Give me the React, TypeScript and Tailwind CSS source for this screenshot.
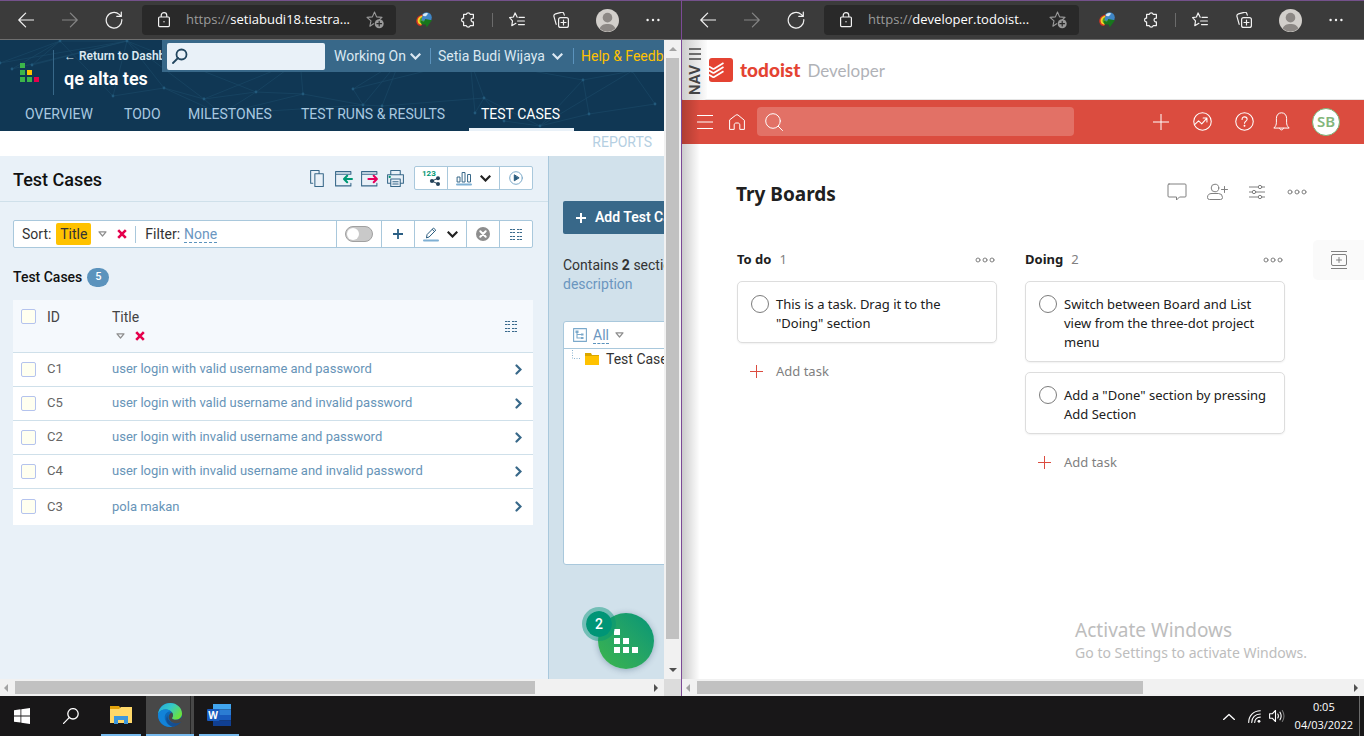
import React from "react";

type IconProps = { className?: string; children: React.ReactNode; box?: string; sw?: number };

function Icon({ className = "size-4", children, box = "0 0 16 16", sw = 1 }: IconProps) {
  return (
    <svg
      viewBox={box}
      className={`shrink-0 ${className}`}
      fill="none"
      stroke="currentColor"
      strokeWidth={sw}
      strokeLinecap="round"
      strokeLinejoin="round"
      aria-hidden="true"
    >
      {children}
    </svg>
  );
}

/* ---------- Browser chrome ---------- */

function ChromeButton({ label, className = "text-[#f2f2f2]", children }: { label: string; className?: string; children: React.ReactNode }) {
  return (
    <button type="button" aria-label={label} className={`flex h-full w-11 shrink-0 items-center justify-center ${className}`}>
      {children}
    </button>
  );
}

function BrowserBar({ host }: { host: string }) {
  return (
    <div className="flex h-10 shrink-0 items-center border-t border-b border-t-[#74518b] border-b-[#6e6e6e] bg-[#3b3b3b] pr-[6px] pl-1 font-['Open_Sans','Noto_Sans',sans-serif]">
      <ChromeButton label="Back">
        <Icon sw={1.2}><path d="M15.5 8H.8M7.6 1.2.8 8l6.8 6.8" /></Icon>
      </ChromeButton>
      <ChromeButton label="Forward" className="text-[#858585]">
        <Icon sw={1.2}><path d="M.5 8h14.7M8.4 1.2 15.2 8l-6.8 6.8" /></Icon>
      </ChromeButton>
      <ChromeButton label="Refresh">
        <Icon className="size-[18px]" box="0 0 18 18" sw={1.2}><path d="M16.8 8.6A7.8 7.8 0 1 1 14.2 3.4L16 5.2M16.3 1v4.4h-4.5" /></Icon>
      </ChromeButton>
      <div className="ml-[6px] flex h-[30px] min-w-0 flex-1 items-center rounded-[4px] bg-[#292929] px-4 text-[13px]">
        <svg viewBox="0 0 12 16" className="mr-4 h-4 w-3 shrink-0" fill="none" stroke="#f2f2f2" strokeWidth="1.2" aria-hidden="true">
          <rect x=".6" y="5" width="10.8" height="9.6" rx="1" />
          <path d="M3.2 5V3.4a2.8 2.8 0 0 1 5.6 0V5" />
          <circle cx="6" cy="9.8" r=".7" fill="#f2f2f2" stroke="none" />
        </svg>
        <span className="text-[#9b9b9b]">https://</span>
        <input aria-label="Address" readOnly value={host} className="min-w-0 flex-1 bg-transparent text-white outline-none" />
        <button type="button" aria-label="Add to favorites" className="-mr-1 shrink-0 text-[#9a9a9a]">
          <Icon className="size-[18px]" box="0 0 18 18" sw={1.1}>
            <path d="m8.5 1 2.1 4.9 5.4.5-2.6 2.3M7.6 12.7l-3.7 2.5 1.1-5.3L1 6.4l5.4-.5L8.5 1" />
            <circle cx="13.2" cy="12.7" r="4.5" fill="#9a9a9a" stroke="none" />
            <path d="M13.2 10.4V15M10.9 12.7h4.6" stroke="#292929" strokeWidth="1.2" />
          </Icon>
        </button>
      </div>
      <div className="ml-[6px] flex h-full shrink-0">
        <ChromeButton label="Download manager">
          <svg viewBox="0 0 18 18" className="size-[18px]" aria-hidden="true">
            <circle cx="11.5" cy="6.5" r="5.3" fill="#3f86c6" />
            <path d="M7.5 4.2c1.6-2.6 4.4-2.8 5.8-1.6-1 .6-1 1.800-2.200 2.400-1.300.6-2.400.2-3.600-.8z" fill="#d9eaf6" />
            <path d="M7.6 3.4C2.8 4.4.6 8 1.400 11.400c.6 2.200 2.600 3.600 4.800 3.600l.8-2C3.600 12.400 4 8 7.200 6z" fill="#d63324" />
            <path d="M7.4 4.600C3.800 5.600 2 8.200 2.800 11c.5 1.800 2 2.800 3.800 2.800V12C4.400 10.600 4.600 7.800 7 6.400z" fill="#f5d327" />
            <path d="M6.900 6.200C4.800 7.400 4 9.200 4.800 11c.4 1 1.400 1.800 2.600 1.800l2.200-.4V9.600L7 9.800z" fill="#4fa42d" />
            <path d="m5.600 9.800 3.400 1L10.200 8l6.800 1.200-5.200 7-1.200-2.600-4-.4z" fill="#17761d" />
          </svg>
        </ChromeButton>
        <ChromeButton label="Extensions">
          <Icon sw={1.2}><path d="M3.6 2.4h2.7a2 2 0 0 1 3.900 0h3.200v3.800a1.900 1.900 0 1 0 0 3.700v3.700h-3.200a2 2 0 0 1-3.900 0H3.600V9.900H3a1.900 1.900 0 0 1 0-3.700h.6z" /></Icon>
        </ChromeButton>
        <span className="mx-[2px] my-3 w-px bg-[#6b6b6b]" />
        <ChromeButton label="Favorites">
          <Icon sw={1.2}><path d="M8.2 5.2 6.1.9 4.4 5 .6 5.6l2.900 3.200-.7 4.900 4.100-2.400M10 5.300h5.400M8.600 9h6.800M9.500 12.600h5.900" /></Icon>
        </ChromeButton>
        <ChromeButton label="Collections">
          <Icon sw={1.2}><rect x="5.6" y="5.6" width="9.8" height="9.8" rx="2" /><path d="M3.2 12.3 1 4.6a2.2 2.2 0 0 1 1.5-2.7l5.7-1.6a2.2 2.2 0 0 1 2.7 1.5l.4 1.4M10.5 8v5M8 10.5h5" /></Icon>
        </ChromeButton>
        <ChromeButton label="Profile" className="mx-[2px]">
          <svg viewBox="0 0 24 24" className="size-[23px]" aria-hidden="true">
            <circle cx="12" cy="12" r="12" fill="#d2cfcb" />
            <circle cx="12" cy="9" r="5" fill="#8c8885" />
            <path d="M3.8 20.4C5 16.800 8 15.600 12 15.600s7 1.200 8.200 4.800A12 12 0 0 1 3.800 20.400z" fill="#8c8885" />
          </svg>
        </ChromeButton>
        <ChromeButton label="Settings and more">
          <Icon><g fill="currentColor" stroke="none"><circle cx="2.6" cy="8" r="1.2" /><circle cx="8" cy="8" r="1.2" /><circle cx="13.4" cy="8" r="1.2" /></g></Icon>
        </ChromeButton>
      </div>
    </div>
  );
}

function Arrow({ className, d }: { className: string; d: string }) {
  return <svg viewBox="0 0 8 8" className={`size-2 shrink-0 ${className}`} aria-hidden="true"><path d={d} fill="currentColor" /></svg>;
}

function HorizontalScroll({ thumb, rest, corner }: { thumb: number; rest: number; corner?: boolean }) {
  return (
    <div className="flex h-[17px] shrink-0" aria-hidden="true">
      <div className="flex min-w-0 flex-1 items-center bg-[#f1f1f1]">
        <Arrow className="mr-[5px] ml-[2px] text-[#a3a3a3]" d="M6 0v8L2 4z" />
        <div className="h-[13px] bg-[#c1c1c1]" style={{ flexGrow: thumb }} />
        <div style={{ flexGrow: rest }} />
        <Arrow className="mr-[4px] ml-[3px] text-[#505050]" d="M2 0v8l4-4z" />
      </div>
      {corner && <div className="w-[17px] bg-[#dcdcdc]" />}
    </div>
  );
}

/* ---------- TestRail ---------- */

function Network() {
  const points = [
    [0, 23], [12, 29], [60, 1], [32, 25], [113, 56], [127, 1], [164, 48], [204, 59], [221, 74], [256, 52], [303, 54], [353, 49], [363, 65],
    [382, 66], [484, 58], [475, 73], [504, 81], [540, 86], [583, 40], [589, 74], [655, 64], [632, 31], [400, 20], [300, 20], [470, 20],
  ];
  const lines = [
    [0, 2], [1, 2], [3, 2], [2, 4], [2, 5], [4, 5], [4, 6], [5, 6], [5, 7], [6, 7], [7, 8], [8, 9], [7, 9], [9, 10], [9, 23], [10, 23], [10, 12], [11, 12],
    [11, 22], [12, 13], [13, 14], [12, 22], [14, 15], [14, 24], [14, 16], [15, 24], [16, 17], [17, 19], [17, 18], [18, 19], [19, 20], [18, 21], [21, 20],
    [14, 17], [0, 5], [1, 5], [8, 12], [7, 23], [5, 9], [22, 24], [18, 24], [17, 21], [6, 8], [8, 10], [11, 24], [13, 22], [3, 5],
  ];
  return (
    <svg className="absolute inset-0 size-full" viewBox="0 0 664 91" preserveAspectRatio="xMinYMin slice" aria-hidden="true">
      {lines.map(([a, b], i) => (
        <line key={i} x1={points[a][0]} y1={points[a][1]} x2={points[b][0]} y2={points[b][1]} stroke="#1a4866" strokeWidth=".7" />
      ))}
      {points.map(([x, y], i) => <circle key={i} cx={x} cy={y} r="1.4" fill="#22597b" />)}
    </svg>
  );
}

function Chevron({ className = "h-[7px] w-[11px]" }: { className?: string }) {
  return <Icon className={className} box="0 0 11 7" sw={2.2}><path d="m1.5 1.5 4 4 4-4" strokeLinecap="square" strokeLinejoin="miter" /></Icon>;
}

function SortMark() {
  return <Icon className="h-[6px] w-[9px] text-[#8e8e8e]" box="0 0 9 6" sw={1.2}><path d="M1 .8h7L4.500 5z" /></Icon>;
}

function Cross() {
  return <Icon className="size-[10px] text-[#e5004c]" box="0 0 10 10" sw={2.6}><path d="m1.200 1.200 7.600 7.600M8.800 1.200 1.200 8.800" strokeLinecap="butt" /></Icon>;
}

function ColumnsIcon() {
  return (
    <Icon className="h-[11px] w-3 text-[#3a6a8c]" box="0 0 12 11" sw={1}>
      <path d="M0 .5h5M7 .5h5M0 3.500h5M7 3.500h5M0 7.500h5M7 7.500h5M0 10.500h5M7 10.500h5" strokeLinecap="butt" strokeDasharray="2.400 .4" />
    </Icon>
  );
}

const navItems = [
  { name: "OVERVIEW", cls: "w-[99px]" },
  { name: "TODO", cls: "w-[64px]" },
  { name: "MILESTONES", cls: "w-[113px]" },
  { name: "TEST RUNS & RESULTS", cls: "w-[180px]" },
];

const cases = [
  { id: "C1", title: "user login with valid username and password" },
  { id: "C5", title: "user login with valid username and invalid password" },
  { id: "C2", title: "user login with invalid username and password" },
  { id: "C4", title: "user login with invalid username and invalid password" },
  { id: "C3", title: "pola makan" },
];

function Check({ label }: { label: string }) {
  return <input type="checkbox" aria-label={label} className="block size-[15px] appearance-none rounded-[2px] border border-[#b4c3ee] bg-[#fffff0]" />;
}

function RailHeader() {
  return (
    <header className="relative h-[91px] shrink-0 overflow-hidden bg-[#103754]">
      <Network />
      <div className="relative flex h-14">
        <div className="flex w-[162px] shrink-0 overflow-hidden pl-5 whitespace-nowrap">
          <svg viewBox="0 0 19 19" className="mt-[23px] size-[19px] shrink-0" aria-hidden="true">
            <g fill="#3cb54a"><path d="M0 0h5v5H0zM0 7h5v5H0zM0 14h5v5H0zM7 14h5v5H7z" /></g>
            <path d="M7 7h5v5H7z" fill="#ffc200" /><path d="M14 14h5v5h-5z" fill="#e6004c" />
          </svg>
          <div className="mt-[10px] ml-[14px] h-[45px] border-l border-[#386889] pl-[10px]">
            <a href="#dashboard" className="block text-[12px] leading-[13px] font-semibold text-[#dbe8f1]">← Return to Dashb</a>
            <h1 className="pt-[6px] text-[18px] leading-[20px] font-semibold text-white">qe alta tes</h1>
          </div>
        </div>
        <div className="flex h-8 min-w-0 flex-1 items-center overflow-hidden bg-[#386889] pl-[5px] text-[14px] whitespace-nowrap text-[#dbe8f2]">
          <label className="flex h-[27px] w-[158px] shrink-0 items-center rounded-[2px] bg-[#e9f1f8] pl-[5px] text-[#22465f]">
            <Icon sw={1.8}><circle cx="9.500" cy="6.500" r="5" /><path d="M6 10 1 15" /></Icon>
            <span className="sr-only">Search</span>
            <input type="text" className="min-w-0 flex-1 bg-transparent outline-none" />
          </label>
          <button type="button" className="ml-[9px] flex w-[96px] shrink-0 items-center gap-1">Working On <Chevron /></button>
          <button type="button" className="flex h-4 w-[143px] shrink-0 items-center gap-[7px] border-l border-[#5b93bd] pl-[7px]">Setia Budi Wijaya <Chevron /></button>
          <a href="#help" className="flex h-4 items-center border-l border-[#5b93bd] pl-[7px] text-[#ffc200]">Help &amp; Feedback</a>
        </div>
      </div>
      <nav className="relative flex h-[35px] pl-[25px] text-[14px] leading-9 whitespace-nowrap text-[#a9c9e0]">
        {navItems.map((n) => <a key={n.name} href="#nav" className={`shrink-0 ${n.cls}`}>{n.name}</a>)}
        <a href="#cases" className="-ml-3 border-b-[3px] border-[#e9f1f8] pr-[14px] pl-3 text-white">TEST CASES</a>
      </nav>
    </header>
  );
}

function ToolCell({ label, className, children }: { label: string; className: string; children: React.ReactNode }) {
  return <button type="button" aria-label={label} className={`flex shrink-0 items-center justify-center border-l border-[#a9c8dc] ${className}`}>{children}</button>;
}

function CasesPanel() {
  return (
    <main className="min-w-0 flex-1">
      <div className="flex h-[46px] items-center border-b border-[#cfe0ea] pr-[15px] pb-px pl-[13px]">
        <h2 className="mr-auto pt-[2px] text-[18px] font-medium text-[#111]">Test Cases</h2>
        <div className="mr-[9px] flex gap-[7px] text-[#386889]">
          <button type="button" aria-label="Copy"><Icon className="size-[19px]" box="0 0 18 18"><path d="M4.500 13.500h-2v-12h8v2.500M6.500 4.500h8v12h-8z" /></Icon></button>
          <button type="button" aria-label="Import">
            <Icon className="size-[19px]" box="0 0 18 18"><path d="M16 5V2.500H1.500v13.500H16v-2.500M1.500 5H16" /><path d="M17 9.500H10M12.500 6.500l-3 3 3 3" stroke="#009874" strokeWidth="2" /></Icon>
          </button>
          <button type="button" aria-label="Export">
            <Icon className="size-[19px]" box="0 0 18 18"><path d="M16 5V2.500H1.500v13.500H16v-2.500M1.500 5H16" /><path d="M8 9.500h7.500M13 6.500l3 3-3 3" stroke="#e6005c" strokeWidth="2" /></Icon>
          </button>
          <button type="button" aria-label="Print">
            <Icon className="size-[19px]" box="0 0 18 18"><path d="M4.500 5.500v-4h9v4M4.500 13.500h-3v-8h15v8h-3M4.500 9.500h9v7h-9zM6.500 12h5M6.500 14.200h5" /><circle cx="3.500" cy="7.500" r=".6" fill="#009874" stroke="#009874" /></Icon>
          </button>
        </div>
        <div className="flex h-6 rounded-[2px] border border-[#a9c8dc] bg-white">
          <button type="button" aria-label="Select IDs" className="flex w-8 items-center justify-center">
            <svg viewBox="0 0 20 16" className="h-4 w-5" aria-hidden="true">
              <text x="1" y="6" fontSize="8" fontWeight="700" fontFamily="Roboto, sans-serif" fill="#009874">123</text>
              <g fill="#24435a"><circle cx="11" cy="11" r="2.100" /><circle cx="17" cy="8.200" r="2" /><circle cx="17" cy="14" r="2" /></g>
              <path d="M17 8.200 11 11l6 3" fill="none" stroke="#24435a" />
            </svg>
          </button>
          <ToolCell label="Charts" className="w-[52px] gap-2 text-[#222]">
            <Icon className="h-[15px] w-4 text-[#386889]" box="0 0 16 15"><path d="M1.500 6h2.500v5H1.500zM6.500 1.500H9V11H6.500zM12 3.500h2.500V11H12z" /><path d="M1 13.500h14" stroke="#7fb0d4" strokeWidth="2" /></Icon>
            <Chevron />
          </ToolCell>
          <ToolCell label="Run" className="w-[33px]">
            <Icon className="size-[14px]" box="0 0 14 14"><circle cx="7" cy="7" r="6.300" stroke="#7ba9c9" /><path d="M5.300 4.200v5.600L9.800 7z" fill="#285b7e" stroke="#285b7e" /></Icon>
          </ToolCell>
        </div>
      </div>

      <div className="pt-[18px] pr-[15px] pl-[13px]">
        <div className="flex h-7 rounded-[2px] border border-[#a9c8dc] bg-white text-[14px] text-[#333]">
          <div className="flex min-w-0 flex-1 items-center pl-2 whitespace-nowrap">
            <span>Sort:</span>
            <button type="button" className="ml-[5px] h-[22px] w-[35px] rounded-[2px] bg-[#ffc200]">Title</button>
            <span className="ml-[7px] flex items-center gap-[10px]"><SortMark /><Cross /></span>
            <span className="ml-2 flex h-[17px] items-center border-l border-[#a9c8dc] pl-[9px]">Filter:</span>
            <button type="button" className="ml-1 border-b border-dashed border-[#5b93bd] leading-4 text-[#6b96bf]">None</button>
          </div>
          <label className="flex w-[45px] items-center justify-center border-l border-[#a9c8dc]">
            <span className="sr-only">Toggle details</span>
            <input type="checkbox" role="switch" className="peer sr-only" />
            <span className="h-4 w-7 rounded-full border border-[#a0a0a0] bg-[#c9c9c9] p-px"><span className="block size-3 rounded-full bg-white" /></span>
          </label>
          <ToolCell label="Add" className="w-[33px] text-[#2b5f84]"><Icon className="size-[10px]" box="0 0 10 10" sw={1.800}><path d="M5 0v10M0 5h10" strokeLinecap="butt" /></Icon></ToolCell>
          <ToolCell label="Edit" className="w-[52px] gap-2 text-[#222]">
            <Icon className="h-[15px] w-4 text-[#285b7e]" box="0 0 16 15"><path d="m3.500 10.500.6-3L10.500 1l2.300 2.200-6.400 6.500zM9.300 2.400l2.200 2.200" /><path d="M1 13.500h14" stroke="#7fb0d4" strokeWidth="2" /></Icon>
            <Chevron />
          </ToolCell>
          <ToolCell label="Delete" className="w-[33px]">
            <Icon className="size-[14px]" box="0 0 14 14"><circle cx="7" cy="7" r="7" fill="#8e8e8e" stroke="none" /><path d="m4.300 4.300 5.400 5.400M9.700 4.300 4.300 9.700" stroke="#fff" strokeWidth="2" /></Icon>
          </ToolCell>
          <ToolCell label="Columns" className="w-[33px]"><ColumnsIcon /></ToolCell>
        </div>

        <div className="flex h-[52px] items-center gap-[5px] pt-[6px]">
          <h3 className="text-[14px] font-medium text-[#111]">Test Cases</h3>
          <span className="flex h-[19px] w-[22px] items-center justify-center rounded-full bg-[#5b93bd] text-[11px] font-medium text-white">5</span>
        </div>

        <table className="w-full table-fixed text-left">
          <thead className="bg-[#f5f9fd] text-[14px] text-[#444]">
            <tr className="h-[52px] border-b border-[#cfe0ea] align-top">
              <th className="w-[34px] pt-[9px] pl-2"><Check label="Select all" /></th>
              <th className="w-[65px] pt-[7px] font-normal">ID</th>
              <th className="pt-[7px] leading-5 font-normal">
                Title
                <span className="flex items-center gap-[10px] pt-1 pl-1"><SortMark /><Cross /></span>
              </th>
              <th className="w-[40px] pt-[21px] pl-3"><button type="button" aria-label="Choose columns" className="block"><ColumnsIcon /></button></th>
            </tr>
          </thead>
          <tbody className="bg-white text-[13px]">
            {cases.map((c) => (
              <tr key={c.id} className="h-[34px] border-b border-[#cfe0ea] last:h-[37px] last:border-b-0">
                <td className="pl-2"><Check label={`Select ${c.id}`} /></td>
                <td className="text-[#666]">{c.id}</td>
                <td className="whitespace-nowrap text-[#6794b8]"><a href="#case">{c.title}</a></td>
                <td className="pl-[22px]">
                  <button type="button" aria-label={`Open ${c.id}`} className="block text-[#386889]">
                    <Icon className="h-[11px] w-[7px]" box="0 0 7 11" sw={2.200}><path d="m1.500 1.500 4 4-4 4" strokeLinejoin="miter" /></Icon>
                  </button>
                </td>
              </tr>
            ))}
          </tbody>
        </table>
      </div>
    </main>
  );
}

function RailSidebar() {
  return (
    <aside className="relative w-[116px] shrink-0 overflow-hidden border-l border-[#a9c8dc] bg-[#d1e1eb] pt-[45px] pl-[14px] text-[14px] whitespace-nowrap text-[#333]">
      <button type="button" className="flex h-[33px] w-[160px] items-center rounded-[2px] bg-[#386889] pl-[13px] font-semibold text-white">
        <Icon className="mr-[9px] size-[10px]" box="0 0 10 10" sw={2}><path d="M5 0v10M0 5h10" strokeLinecap="butt" /></Icon>
        Add Test Case
      </button>
      <p className="pt-[22px] leading-[19px]">
        Contains <b>2</b> sections<br />
        <a href="#description" className="text-[#6b96bf]">description</a>
      </p>
      <div className="mt-[27px] h-[244px] w-[160px] rounded-[3px] border border-[#a9c8dc] bg-white">
        <div className="flex h-[27px] items-center border-b border-[#a9c8dc] pl-[9px]">
          <Icon className="size-[14px] text-[#7ba9cb]" box="0 0 14 14" sw={1.100}><rect x=".6" y=".6" width="12.800" height="12.800" /><path d="M4 4v6h5M4 6.500h5" /><path d="M2.500 2.500h3v2.500h-3zM8 5.500h2.500v2H8zM8 9h2.500v2H8z" fill="currentColor" stroke="none" /></Icon>
          <button type="button" className="mr-[6px] ml-[6px] border-b border-dashed border-[#5b93bd] leading-4 text-[#6b96bf]">All</button>
          <SortMark />
        </div>
        <div className="flex items-center pl-2 leading-5">
          <Icon className="mb-2 h-[10px] w-2" box="0 0 8 10"><path d="M.5 0v8.500H8" stroke="#8db4d1" strokeDasharray="1 1.500" strokeLinecap="butt" /></Icon>
          <Icon className="mr-[7px] ml-[5px] h-3 w-[14px]" box="0 0 14 12"><path d="M0 0h6l1 2h7v3H0z" fill="#d9a600" stroke="none" /><path d="M0 3h14v9H0z" fill="#ffc200" stroke="none" /></Icon>
          Test Cases
        </div>
      </div>
      <button type="button" aria-label="Help, 2 notifications" className="absolute right-[10px] bottom-[10px] flex size-14 items-center justify-center rounded-full bg-linear-to-tr from-[#3cb54a] to-[#009576] shadow-[0_1px_6px_rgba(0,40,80,0.3)]">
        <svg viewBox="0 0 24 24" className="size-6" aria-hidden="true"><path d="M0 0h6v6H0zM0 9h6v6H0zM9 9h6v6H9zM0 18h6v6H0zM9 18h6v6H9zM18 18h6v6h-6z" fill="#fff" /></svg>
        <span className="absolute -top-[6px] -left-4 flex size-[34px] items-center justify-center rounded-full border-4 border-[#009576]/45 bg-[#009576] bg-clip-padding text-[14px] font-medium text-white">2</span>
      </button>
    </aside>
  );
}

function TestRailWindow() {
  return (
    <section className="flex min-w-0 flex-col border-r border-[#7c4a96] font-[Roboto,'Liberation_Sans',sans-serif]">
      <BrowserBar host="setiabudi18.testra..." />
      <div className="flex flex-1">
        <div className="flex min-w-0 flex-1 flex-col">
          <RailHeader />
          <div className="flex h-[25px] shrink-0 justify-end bg-white pr-3 text-[14px] leading-[22px] text-[#b5cfe2]"><a href="#reports">REPORTS</a></div>
          <div className="flex flex-1 bg-[#e9f1f8]">
            <CasesPanel />
            <RailSidebar />
          </div>
        </div>
        <div className="flex w-[17px] shrink-0 flex-col items-center bg-[#f1f1f1]" aria-hidden="true">
          <Arrow className="my-[5px] text-[#a3a3a3]" d="M0 6h8L4 2z" />
          <div className="w-[13px] grow-[582] bg-[#c1c1c1]" />
          <div className="grow-[22]" />
          <Arrow className="my-[5px] text-[#505050]" d="M0 2h8L4 6z" />
        </div>
      </div>
      <HorizontalScroll thumb={520} rest={114} corner />
    </section>
  );
}

/* ---------- Todoist ---------- */

function Dots() {
  return <Icon className="h-[6px] w-5 text-[#808080]" box="0 0 20 6"><circle cx="3" cy="3" r="2" /><circle cx="10" cy="3" r="2" /><circle cx="17" cy="3" r="2" /></Icon>;
}

type Column = { name: string; tasks: string[] };

const columns: Column[] = [
  { name: "To do", tasks: ['This is a task. Drag it to the "Doing" section'] },
  { name: "Doing", tasks: ["Switch between Board and List view from the three-dot project menu", 'Add a "Done" section by pressing Add Section'] },
];

function BoardColumn({ column }: { column: Column }) {
  return (
    <section className="w-[260px] shrink-0">
      <div className="flex h-10 items-center">
        <h3 className="text-[13px] font-bold text-[#202020]">{column.name}</h3>
        <span className="ml-2 text-[13px] text-[#808080]">{column.tasks.length}</span>
        <button type="button" aria-label={`${column.name} options`} className="mr-[2px] ml-auto"><Dots /></button>
      </div>
      <div className="flex flex-col gap-[10px] pt-px">
        {column.tasks.map((task) => (
          <label key={task} className="flex rounded-[5px] border border-[#dddddd] bg-white pt-[13px] pr-[9px] pb-[9px] pl-[13px] text-[13px] leading-[19px] text-[#202020] shadow-[0_1px_2px_rgba(0,0,0,0.06)]">
            <input type="checkbox" className="mr-[7px] size-[18px] shrink-0 appearance-none rounded-full border border-[#7c7c7c]" />
            <span className="max-w-52">{task}</span>
          </label>
        ))}
      </div>
      <button type="button" className="mt-[18px] flex items-center gap-[13px] pl-[13px] text-[13px] leading-5 text-[#808080]">
        <Icon className="size-[13px] text-[#db4c3f]" box="0 0 13 13"><path d="M6.500 0v13M0 6.500h13" /></Icon>
        Add task
      </button>
    </section>
  );
}

function TodoistWindow() {
  return (
    <section className="relative flex min-w-0 flex-col font-['Noto_Sans','Open_Sans',sans-serif]">
      <BrowserBar host="developer.todoist..." />
      <div className="relative flex flex-1 flex-col overflow-hidden bg-white">
        <header className="flex h-[60px] shrink-0 items-center border-b border-[#e5e5e5] pt-px pl-[27px] font-[Lato,sans-serif]">
          <svg viewBox="0 0 24 24" className="size-6 shrink-0" aria-hidden="true">
            <rect width="24" height="24" rx="3" fill="#e44332" />
            <g fill="none" stroke="#fff" strokeWidth="1.700" strokeLinejoin="round"><path d="m0 8.500 3.800 2.200c.6.300.9.200 1.300 0L14.500 5M0 12.600l3.800 2.200c.6.300.9.200 1.300 0l9.400-5.700M0 16.700l3.800 2.200c.6.300.9.200 1.300 0l9.400-5.700" /></g>
          </svg>
          <span className="ml-[7px] text-[19px] font-black text-[#e44332]">todoist</span>
          <span className="ml-[7px] pt-px text-[17px] text-[#b0b2b7]">Developer</span>
        </header>
        <div className="flex h-11 shrink-0 items-center bg-[#db4c3f] pr-6 pb-px pl-[15px] text-white">
          <button type="button" aria-label="Menu" className="mr-4"><Icon><path d="M0 1.500h16M0 8h16M0 14.500h16" /></Icon></button>
          <button type="button" aria-label="Home" className="mr-3"><Icon><path d="M.6 6.300v9.100h4.600V11c0-1.200.8-2 1.800-2h2c1 0 1.800.8 1.800 2v4.400h4.600V6.300L9 1Q8 .3 7 1z" /></Icon></button>
          <label className="flex h-[29px] min-w-0 flex-1 items-center rounded-[4px] bg-[#e27166] pl-2">
            <Icon className="size-[18px]" box="0 0 18 18"><circle cx="8" cy="8" r="7.300" /><path d="m13.300 13.300 4.200 4.200" /></Icon>
            <span className="sr-only">Search tasks</span>
            <input type="text" className="min-w-0 flex-1 bg-transparent outline-none" />
          </label>
          <button type="button" aria-label="Quick add" className="ml-[79px]"><Icon><path d="M8 0v16M0 8h16" /></Icon></button>
          <button type="button" aria-label="Productivity" className="ml-6"><Icon className="size-[19px]" box="0 0 18 18"><circle cx="9" cy="9" r="8.300" /><path d="m1.500 12 3.800-3.600 3 2.800L13 6M9.600 5.700h3.600v3.700" /></Icon></button>
          <button type="button" aria-label="Help" className="ml-[23px]"><Icon className="size-[19px]" box="0 0 18 18"><circle cx="9" cy="9" r="8.300" /><path d="M6.700 7c0-3.400 4.800-2.900 4.800-.1 0 1.700-2.500 1.700-2.500 3.800" /><circle cx="9" cy="13" r=".4" fill="currentColor" /></Icon></button>
          <button type="button" aria-label="Notifications" className="ml-[19px]"><Icon className="h-[19px] w-[17px]" box="0 0 16 19"><path d="M.6 15.800c1.600-1.500 2.300-3 2.300-5.600V6.400C2.900 3 5 .8 8 .8s5.100 2.200 5.100 5.600v3.800c0 2.600.7 4.100 2.300 5.600zM6 16.200c.4 2.400 3.600 2.400 4 0" /></Icon></button>
          <button type="button" className="ml-[22px] flex size-7 shrink-0 items-center justify-center rounded-full border border-[#7ab476] bg-white text-[15px] font-semibold text-[#84b67c]">SB</button>
        </div>
        <div className="flex items-center pt-[30px] pr-[57px] pl-[54px]">
          <h2 className="mr-auto text-[19px] leading-10 font-bold text-[#202020]">Try Boards</h2>
          <div className="flex items-center pb-1 text-[#808080]">
            <button type="button" aria-label="Comments"><Icon className="size-5" box="0 0 20 20"><path d="M2 2h16q1 0 1 1v11q0 1-1 1h-5.500L9.500 18v-3H2q-1 0-1-1V3q0-1 1-1z" /></Icon></button>
            <button type="button" aria-label="Share" className="ml-[17px]"><Icon className="h-[18px] w-6" box="0 0 24 18"><circle cx="11" cy="5" r="3.800" /><path d="M7.500 10.500h7q4 0 4 4 0 2-2 2h-11q-2 0-2-2 0-4 4-4zM17.500 6.500h6M20.500 3.500v6" /></Icon></button>
            <button type="button" aria-label="View options" className="ml-[21px]"><Icon><path d="M0 3h9M13 3h3M0 8h3M7 8h9M0 13h9M13 13h3" /><circle cx="11" cy="3" r="1.700" /><circle cx="5" cy="8" r="1.700" /><circle cx="11" cy="13" r="1.700" /></Icon></button>
            <button type="button" aria-label="More options" className="ml-[22px]"><Dots /></button>
          </div>
        </div>
        <div className="flex gap-7 pt-[26px] pl-[55px]">
          {columns.map((c) => <BoardColumn key={c.name} column={c} />)}
          <button type="button" aria-label="Add section" className="flex h-10 min-w-0 flex-1 items-center overflow-hidden rounded-l-[5px] bg-[#fafafa] pl-[18px] text-[#808080]">
            <Icon className="h-[18px] w-4" box="0 0 16 18"><path d="M0 .5h16M0 17.500h16M2 3.500h12q1.500 0 1.500 1.500v8q0 1.500-1.500 1.500H2Q.5 14.500.5 13V5Q.5 3.500 2 3.500zM8 6.500v5M5.500 9h5" /></Icon>
          </button>
        </div>
        <div className="pointer-events-none absolute right-[57px] bottom-4 text-[#bdbdbd]">
          <p className="text-[19px] leading-[26px]">Activate Windows</p>
          <p className="text-[14px] leading-5">Go to Settings to activate Windows.</p>
        </div>
        <div className="pointer-events-none absolute inset-y-0 left-0 w-[18px] bg-linear-to-r from-black/20 to-transparent" />
        <button type="button" className="absolute top-0 left-px flex h-[60px] w-6 flex-col items-center gap-[5px] rounded-br-[4px] bg-linear-to-r from-[#cfcfcf] to-[#fcfcfc] pt-2 text-[#444]">
          <Icon className="h-3 w-3" box="0 0 12 12" sw={1.700}><path d="M0 1h12M0 6h12M0 11h12" strokeLinecap="butt" /></Icon>
          <span className="rotate-180 font-[Roboto,sans-serif] text-[15px] leading-[15px] font-semibold [writing-mode:vertical-rl]">NAV</span>
        </button>
      </div>
      <HorizontalScroll thumb={446} rest={206} />
    </section>
  );
}

/* ---------- Taskbar ---------- */

function Taskbar() {
  return (
    <footer className="flex h-10 shrink-0 items-stretch bg-[#181718] text-white">
      <button type="button" aria-label="Start" className="flex w-11 items-center justify-center">
        <svg viewBox="0 0 16 16" className="size-4" fill="#fff" aria-hidden="true"><path d="M0 2.200 6.500 1.300v6.200H0zM7.300 1.200 16 0v7.500H7.300zM0 8.400h6.500v6.200L0 13.700zM7.300 8.400H16V16l-8.700-1.200z" /></svg>
      </button>
      <button type="button" aria-label="Search" className="flex w-[53px] items-center justify-center">
        <Icon sw={1.300}><circle cx="10" cy="5.800" r="5.200" /><path d="M6.200 9.600.6 15.400" /></Icon>
      </button>
      <button type="button" aria-label="File Explorer" className="ml-1 flex w-10 items-center justify-center border-b-2 border-[#76b9ed]">
        <svg viewBox="0 0 22 20" className="h-5 w-[22px]" aria-hidden="true"><path d="M0 1h9l1.500 2H22v3H0z" fill="#e2a20b" /><path d="M0 4h9l2-2h11v16H0z" fill="#ffd869" /><path d="M4 11h14v8h-4v-4H8v4H4z" fill="#3c97dd" /></svg>
      </button>
      <button type="button" aria-label="Microsoft Edge" className="ml-[5px] flex w-12 items-center border-b-2 border-[#76b9ed] bg-[#484848] pl-3">
        <svg viewBox="0 0 24 24" className="size-6" aria-hidden="true">
          <defs>
            <linearGradient id="edgeTop" x1="0" y1="0" x2="1" y2=".6"><stop offset="0" stopColor="#24a6dc" /><stop offset=".5" stopColor="#35c8c8" /><stop offset="1" stopColor="#6ce23a" /></linearGradient>
          </defs>
          <circle cx="12" cy="12" r="12" fill="#0c68b8" />
          <path d="M0 11C.8 4.500 5.800 0 12.200 0 19 0 24 5 24 10.600c0 3.900-2.800 6.200-6 6.200-2.600 0-4.100-1-4-1.900.1-.6 1-1 1-2.900C15 8.500 11 6.500 7.500 6.500 4 6.500 1.200 8.500 0 11z" fill="url(#edgeTop)" />
          <path d="M0 11c1.200-2.800 4-4.500 7.500-4.500 2 0 4 .7 5.300 1.800C8 8.500 6 12.500 7 16.500c1 3.700 4 6.300 7.500 7.200C6.500 25 0 19.500 0 12z" fill="#1283d8" />
          <path d="M9.500 12c-.8 4.500 3.500 8.500 8.500 8 1.800-.2 3.400-.8 4.200-1.400.5-.3.900.1.600.6A12 12 0 0 1 14.800 23.700C9.500 22.500 6.500 17 9.500 12z" fill="#154f92" />
          <path d="M15 12c0 1.900-.9 2.300-1 2.900-.1.900 1.400 1.900 4 1.900 2.400 0 4.500-1.200 5.400-3.400l.6 4-1.200 1.600c-4 2.200-9.800 1.400-11.800-3C10 13 12 10 14 9.500c.700.800 1 1.600 1 2.500z" fill="#484848" />
        </svg>
        <span className="ml-2 h-full w-px bg-[#262626]" />
      </button>
      <button type="button" aria-label="Word" className="ml-[5px] flex w-10 items-center justify-center border-b-2 border-[#76b9ed]">
        <svg viewBox="0 0 24 22" className="h-[22px] w-6" aria-hidden="true">
          <path d="M6 0h18v5.500H6z" fill="#41a5ee" /><path d="M6 5.500h18V11H6z" fill="#2b7cd3" /><path d="M6 11h18v5.500H6z" fill="#185abd" /><path d="M6 16.500h18V22H6z" fill="#103f91" />
          <rect y="5" width="12.500" height="12" rx="1" fill="#185abd" /><text x="6.200" y="14.800" textAnchor="middle" fontSize="10" fontWeight="700" fontFamily="Open Sans, sans-serif" fill="#fff">W</text>
        </svg>
      </button>
      <div className="ml-auto flex items-center">
        <button type="button" aria-label="Show hidden icons"><Icon className="h-[7px] w-3" box="0 0 12 7" sw={1.300}><path d="m.6 6.400 5.400-5 5.400 5" /></Icon></button>
        <button type="button" aria-label="Network" className="ml-[13px]">
          <Icon className="size-[13px]" box="0 0 13 13" sw={1.100}><path d="M.7 12.500C.7 6 5.500.8 12.300.8M3.700 12.500C3.700 7.600 7.300 4 12.300 4M6.700 12.500c0-3.300 2.300-5.400 5.600-5.400" /><circle cx="11" cy="11.300" r="1.400" fill="currentColor" stroke="none" /></Icon>
        </button>
        <button type="button" aria-label="Volume" className="ml-2">
          <Icon className="h-[14px] w-4" box="0 0 16 14" sw={1.100}><path d="M.6 4.800h2.600L6.500 1.500v11L3.200 9.200H.6zM8.800 5q1.200 2 0 4M11 3.200q2.300 3.800 0 7.600" /><path d="M13.300 1.500q3.400 5.500 0 11" stroke="#777" /></Icon>
        </button>
        <time className="ml-[10px] text-center font-['Open_Sans','Noto_Sans',sans-serif] text-[11px] leading-[18px]">0:05<br />04/03/2022</time>
        <span className="mr-1 ml-[6px] h-10 w-px bg-[#6b6b6b]" />
      </div>
    </footer>
  );
}

export default function App() {
  return (
    <div className="flex min-h-screen flex-col bg-[#3b3b3b]">
      <div className="grid flex-1 grid-cols-2">
        <TestRailWindow />
        <TodoistWindow />
      </div>
      <Taskbar />
    </div>
  );
}
